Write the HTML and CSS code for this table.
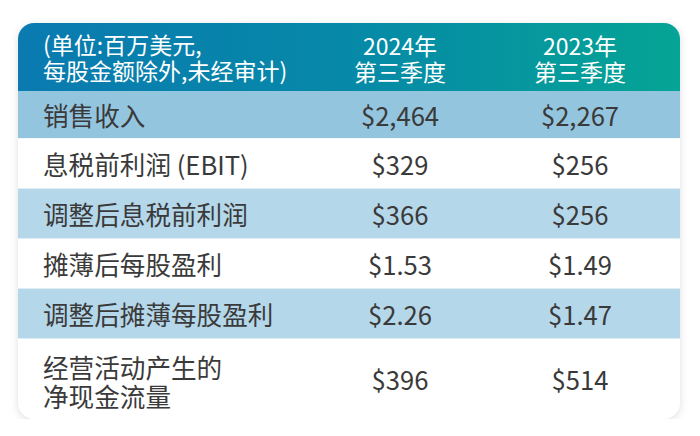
FILE: index.html
```html
<!DOCTYPE html>
<html lang="zh-CN">
<head>
<meta charset="utf-8">
<link rel="stylesheet" href="styles.css">
</head>
<body>
<div class="card">
  <div class="row head">
    <div class="label">(单位:百万美元,<br>每股金额除外,未经审计)</div>
    <div class="num">2024年<br>第三季度</div>
    <div class="num">2023年<br>第三季度</div>
  </div>
  <div class="row dark">
    <div class="label">销售收入</div>
    <div class="num">$2,464</div>
    <div class="num">$2,267</div>
  </div>
  <div class="row">
    <div class="label">息税前利润 (EBIT)</div>
    <div class="num">$329</div>
    <div class="num">$256</div>
  </div>
  <div class="row light">
    <div class="label">调整后息税前利润</div>
    <div class="num">$366</div>
    <div class="num">$256</div>
  </div>
  <div class="row">
    <div class="label">摊薄后每股盈利</div>
    <div class="num">$1.53</div>
    <div class="num">$1.49</div>
  </div>
  <div class="row light">
    <div class="label">调整后摊薄每股盈利</div>
    <div class="num">$2.26</div>
    <div class="num">$1.47</div>
  </div>
  <div class="row tall">
    <div class="label">经营活动产生的<br>净现金流量</div>
    <div class="num">$396</div>
    <div class="num">$514</div>
  </div>
</div>
</body>
</html>
```

FILE: styles.css
```css
html, body {
  margin: 0;
  padding: 0;
  background: #ffffff;
}
body {
  padding: 23px 20px 0 18px;
  font-family: "Noto Sans CJK SC", "Noto Sans", sans-serif;
  color: #3a3a3a;
}
.card {
  width: 662px;
  border-radius: 16px;
  overflow: hidden;
  background: #ffffff;
  box-shadow: 0 2px 8px rgba(0, 0, 0, 0.13);
}
.row {
  display: grid;
  grid-template-columns: 292px 180px 180px;
  align-items: center;
  height: 49px;
  font-size: 25.6px;
  line-height: 28px;
  border-bottom: 1px solid #dfedf5;
}
.row .label {
  padding-left: 25px;
}
.row .num {
  text-align: center;
}
.head {
  height: 68px;
  border-bottom: none;
  color: #ffffff;
  font-size: 23px;
  line-height: 26px;
  background: linear-gradient(90deg, #0a7ab0 0%, #0689a8 50%, #05a495 100%);
}
.head .num {
  padding-top: 2px;
}
.dark {
  background: #94c5df;
  height: 47px;
  border-bottom: 1px solid #f3f8fb;
}
.light {
  background: #b5d7ea;
}
.tall {
  height: 80px;
  border-bottom: none;
}
.tall .label {
  line-height: 29px;
  padding-top: 4px;
}
```
